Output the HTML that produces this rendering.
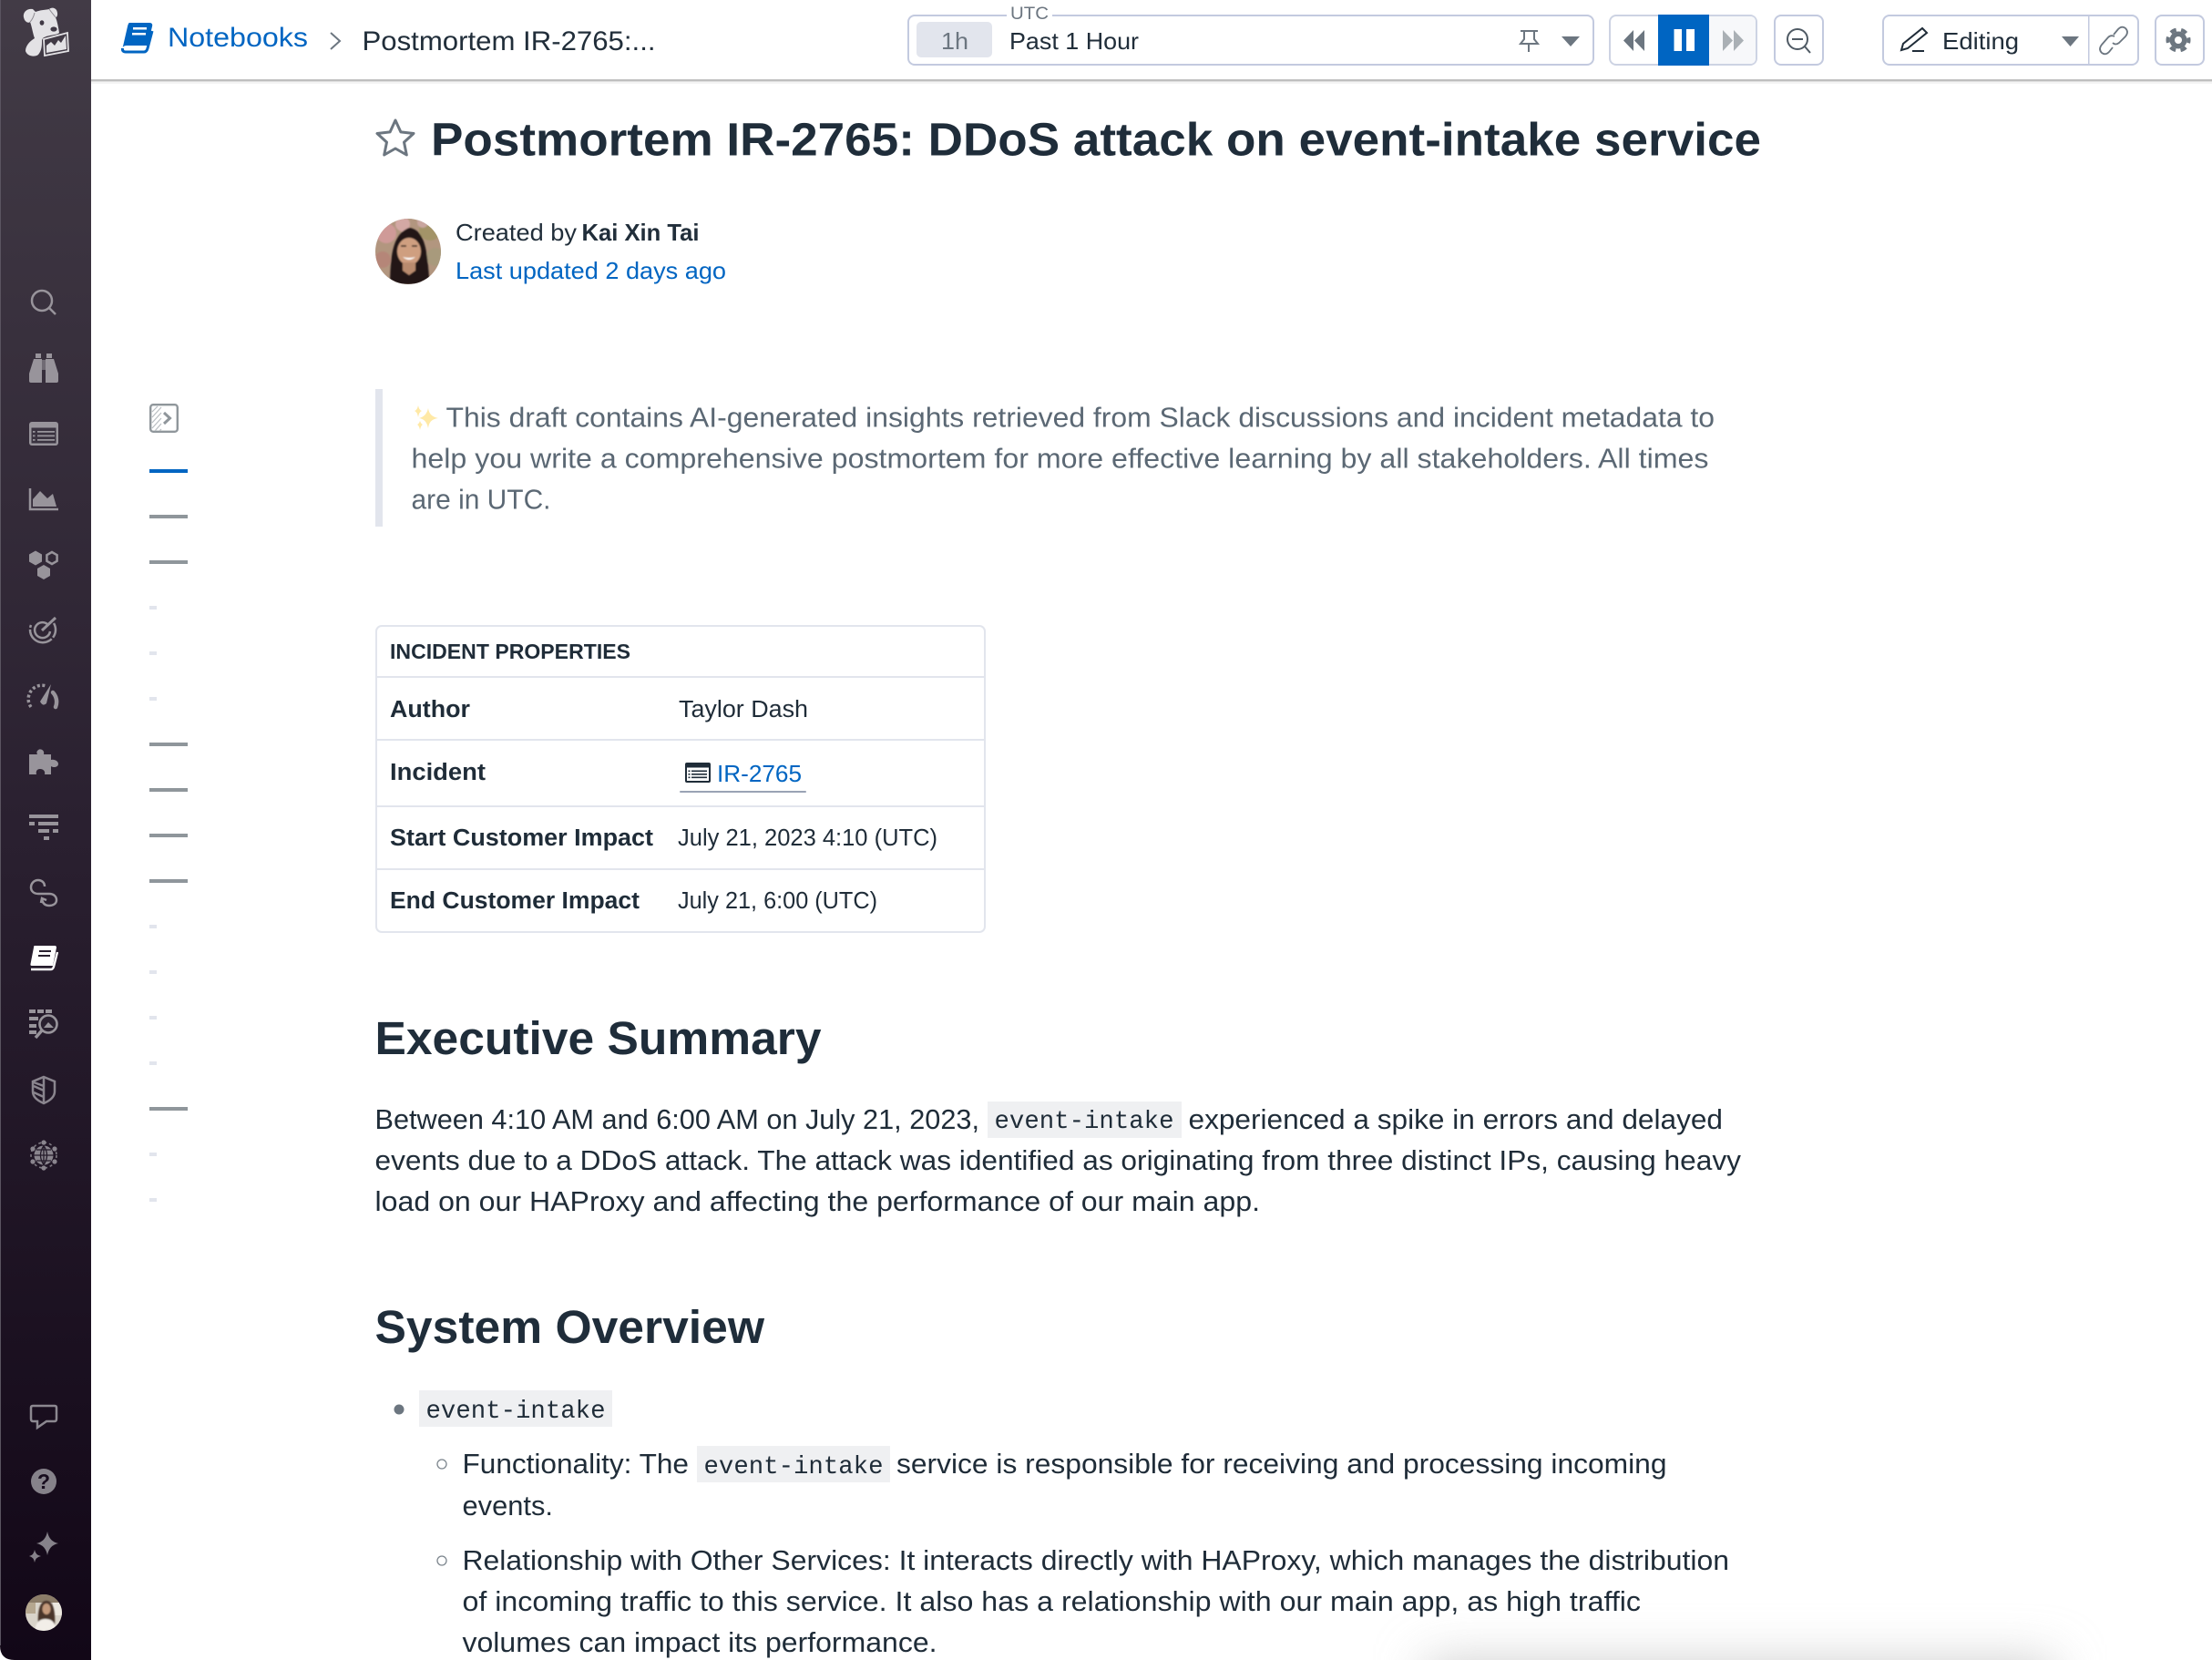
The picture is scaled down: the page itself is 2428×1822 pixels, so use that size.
<!DOCTYPE html>
<html lang="en"><head><meta charset="utf-8"><title>Postmortem IR-2765</title>
<style>
html,body{margin:0;padding:0;width:2428px;height:1822px;overflow:hidden;background:#fff}
svg{display:block}
text{font-family:"Liberation Sans",sans-serif;fill:#212e3a;white-space:pre}
.b{font-size:30.5px;fill:#1f2c38}
.q{font-size:30.5px;fill:#5b6874}
.t{font-size:25.5px;fill:#1f2c38}
.tb{font-size:25.5px;font-weight:700;fill:#1f2c38}
.h{font-size:51px;font-weight:700;fill:#1f2d3a}
.m{font-family:"Liberation Mono",monospace;font-size:27.5px;fill:#1f2c38}
.i{fill:#98949b}
.s{fill:none;stroke:#98949b;stroke-width:2.5}
.c{fill:#eff0f2}
.bx{fill:#fff;stroke:#c3cadf;stroke-width:2}
</style></head><body>
<svg xmlns="http://www.w3.org/2000/svg" width="2428" height="1822" viewBox="0 0 2428 1822">
<defs>
<linearGradient id="sb" x1="0" y1="0" x2="0" y2="1"><stop offset="0" stop-color="#423b46"/><stop offset=".5" stop-color="#2a2030"/><stop offset="1" stop-color="#120717"/></linearGradient>
<filter id="bl" filterUnits="userSpaceOnUse" x="1400" y="1650" width="1028" height="340"><feGaussianBlur stdDeviation="26"/></filter>
<filter id="sf" x="-20%" y="-20%" width="140%" height="140%"><feGaussianBlur stdDeviation="0.9"/></filter>
<clipPath id="a1"><circle cx="448" cy="276" r="36"/></clipPath>
<clipPath id="a2"><circle cx="48" cy="1770" r="20"/></clipPath>
</defs>

<!-- bottom shadow -->
<rect x="1565" y="1822" width="690" height="90" fill="#d0d0d0" filter="url(#bl)"/>

<!-- sidebar -->
<path d="M0 0H100V1822H16Q0 1822 0 1806Z" fill="url(#sb)"/>
<rect x="0" y="0" width="1" height="1806" fill="#5a5460"/>

<!-- logo -->
<path fill="#e3e2e5" d="M36 10C30 9 25 13 26 19C27 24 31 26 33 24C35 29 36 37 38 42C33 45 28 50 28 56C30 62 38 63 42 60C46 55 46 50 46 44L47 42C52 38 62 39 65 36C64 30 63 24 61 19C63 19 64 15 62 11C60 8 56 8 54 10C49 11 44 11 39 13Z"/>
<path d="M38 14C37 18 36 21 33 24M54 10C56 13 58 15 61 19" fill="none" stroke="#8f8b92" stroke-width="1"/>
<ellipse cx="46" cy="25" rx="2.4" ry="2.8" fill="#403945"/>
<ellipse cx="59" cy="32" rx="3.6" ry="2.6" fill="#403945"/>
<path d="M48 43L74 36L75 56L49 61Z" fill="#413a45" stroke="#e3e2e5" stroke-width="1.8"/>
<path d="M51 50L56 46L60 50L64 44L67 47L72 39L73 54L51 58Z" fill="#e3e2e5"/>

<!-- sidebar icons -->
<circle class="s" cx="46" cy="330" r="11"/><path class="s" d="M54 338L61 345"/>
<path class="i" d="M39 388h6v5h-6zM51 388h6v5h-6zM37 394h9v26H34q-2 0-2-2v-8zM59 394h-9v26h12q2 0 2-2v-8z"/><rect x="46" y="395" width="4" height="11" fill="#706b74"/>
<rect class="i" x="32" y="463" width="32" height="26" rx="3"/><rect x="34.5" y="469.5" width="27" height="17" fill="#3a3340"/>
<path class="i" d="M41 473h19v1.8H41zM41 477.5h19v1.8H41zM41 482h19v1.8H41zM36 473h2.5v1.8H36zM36 477.5h2.5v1.8H36zM36 482h2.5v1.8H36z"/>
<path class="s" d="M33 536V559H64"/><path class="i" d="M36 556V548L44 539L52 547L58 542L62 556Z"/>
<path class="i" d="M39 604.5L46 608.5V616.5L39 620.5L32 616.5V608.5ZM48 620L55 624V632L48 636L41 632V624Z"/>
<path class="s" d="M57 606L62.6 609.2V615.8L57 619L51.4 615.8V609.2Z"/>
<path class="s" style="stroke-dasharray:3 2 30 0" d="M34 686A14 14 0 1 0 59 684"/><path class="s" d="M53 686A8.5 8.5 0 1 0 55 693"/>
<path class="s" style="stroke-width:3" d="M46 692L61 678"/>
<path class="s" style="stroke-dasharray:3 2.5;stroke-width:3.5" d="M34 776A15 15 0 0 1 51 753"/><path class="s" style="stroke-width:4.5;stroke-linecap:round" d="M58 760A15 15 0 0 1 61 776"/>
<path class="i" d="M44 770L56 751L51 772Q47 776 44 770Z"/>
<path class="i" d="M32 828H41C40 826 40 824 43 822.5C46 822 49 824 48 828H56V834C59 833 64 835 64 838.5C64 842 59 843 56 841V850H49C50 846 47 844 44 844C41 844 39 846 40 850H32Z"/>
<path class="i" d="M32 894h32v4H32zM32 902h6v4h-6zM42 902h22v4H42zM42 910h12v4H42zM58 910h6v4h-6zM48 918h6v4h-6z"/>
<path class="s" d="M49 973C49 968 45 966 42 966C37 966 34 970 34 974C34 978 37 981 42 981H54C59 981 62 984 62 988C62 992 58 994 54 994C50 994 47 992 46 987"/>
<path class="s" d="M51 988L46 986L45 991"/>
<path fill="#fff" d="M38 1038H60Q62 1038 62 1040L58 1060H35Q33 1060 33.5 1058L37 1040Q37 1038 38 1038Z"/>
<rect x="43" y="1043" width="13" height="2" fill="#29202f"/><rect x="42" y="1048" width="13" height="2" fill="#29202f"/>
<path d="M34 1064H56Q58 1064 59 1061L63 1045" fill="none" stroke="#fff" stroke-width="2.4"/>
<path class="i" d="M32 1108h7v4h-7zM41 1108h7v4h-7zM50 1108h7v4h-7zM32 1116h10v4H32zM32 1124h8v4h-8zM32 1131h8v4h-8z"/>
<circle cx="53" cy="1124" r="9.5" fill="#29202f" stroke="#98949b" stroke-width="2.6"/><path class="s" style="stroke-width:3.5" d="M46 1131L39 1139"/><path class="i" d="M48 1128L53 1122L59 1128Z"/>
<path class="s" style="stroke:#8a858e" d="M48 1182L60 1187V1198C60 1204 55 1208 48 1211C41 1208 36 1204 36 1198V1187Z"/>
<path class="s" style="stroke:#8a858e" d="M48 1182V1211M37 1192L48 1197M37 1199L48 1204M37 1188L48 1192"/>
<circle cx="48" cy="1268" r="10.5" fill="#8a858e"/><path d="M37.5 1268H58.5M48 1257.5V1278.5M48 1257.5Q41 1268 48 1278.5M48 1257.5Q55 1268 48 1278.5M40 1262H56M40 1274H56" fill="none" stroke="#241b2a" stroke-width="1.3"/>
<circle class="s" cx="48" cy="1268" r="14" style="stroke-dasharray:3 3;stroke-width:1.6;stroke:#7d7881"/>
<g fill="#8a858e"><circle cx="48" cy="1254" r="2.6"/><circle cx="48" cy="1282" r="2.6"/><circle cx="36" cy="1261" r="2.6"/><circle cx="60" cy="1261" r="2.6"/><circle cx="36" cy="1275" r="2.6"/><circle cx="60" cy="1275" r="2.6"/></g>
<path class="s" style="stroke:#8c8890" d="M36 1543H60Q62 1543 62 1545V1557Q62 1560 60 1560H51L41 1567V1560H36Q34 1560 34 1557V1545Q34 1543 36 1543Z"/>
<circle cx="48" cy="1626" r="14" fill="#86828a"/><text x="48" y="1634" text-anchor="middle" style="font-size:23px;font-weight:700;fill:#170c1d">?</text>
<path fill="#86828a" d="M52 1681Q54 1692 64 1694Q54 1696 52 1707Q50 1696 40 1694Q50 1692 52 1681ZM38 1701Q39 1707 45 1708Q39 1709 38 1715Q37 1709 32 1708Q37 1707 38 1701Z"/>
<g clip-path="url(#a2)"><rect x="28" y="1750" width="40" height="40" fill="#d9d4ca"/><rect x="28" y="1750" width="40" height="9" fill="#8b7c68"/><rect x="28" y="1759" width="11" height="12" fill="#b5a78f"/><rect x="58" y="1759" width="10" height="14" fill="#ece8df"/><g filter="url(#sf)"><path d="M42 1785C41 1770 43 1757 51 1757C59 1757 61 1770 60 1785Z" fill="#4a352a"/><ellipse cx="51" cy="1766" rx="4.5" ry="6" fill="#c49a7c"/><path d="M38 1790Q40 1776 51 1777Q60 1777 62 1790Z" fill="#f2eee8"/></g></g>

<!-- header -->
<rect x="100" y="87" width="2328" height="2" fill="#bfbfbf"/><rect x="100" y="89" width="2328" height="1" fill="#e0e0e0"/><rect x="100" y="90" width="2328" height="2" fill="#f4f4f4"/>
<path d="M142 25H164Q168 25 167 29L162 50H139Q135 50 134.5 53L140 29Q141 25 142 25Z" fill="#0065c2"/>
<path d="M134.5 53Q134 57 138 57H158Q161 57 162 53L167 34" fill="none" stroke="#0065c2" stroke-width="3"/>
<rect x="146" y="30" width="15" height="2.5" fill="#fff"/><rect x="145" y="36" width="15" height="2.5" fill="#fff"/>
<text x="184" y="51" textLength="154" lengthAdjust="spacingAndGlyphs" style="font-size:30px;fill:#0065c2">Notebooks</text>
<path d="M363 36L373 45L363 54" fill="none" stroke="#6c7680" stroke-width="2"/>
<text x="397.5" y="55" textLength="322" lengthAdjust="spacingAndGlyphs" style="font-size:30px">Postmortem IR-2765:...</text>

<!-- time controls -->
<rect class="bx" x="997" y="17" width="752" height="54" rx="7"/>
<rect x="1105" y="10" width="50" height="12" fill="#fff"/>
<text x="1109" y="21" textLength="42" lengthAdjust="spacingAndGlyphs" style="font-size:19px;fill:#6c7680">UTC</text>
<rect x="1006" y="24" width="83" height="39" rx="5" fill="#e2e5ed"/>
<text x="1033" y="54" textLength="30" lengthAdjust="spacingAndGlyphs" style="font-size:26px;fill:#6c7680">1h</text>
<text x="1108" y="54" textLength="142" lengthAdjust="spacingAndGlyphs" style="font-size:26px">Past 1 Hour</text>
<path d="M1669 34H1688M1673 34V43L1669 48H1688L1684 43V34M1678 48V57" fill="none" stroke="#6c7680" stroke-width="2"/>
<path d="M1714 40H1734L1724 51Z" fill="#6c7680"/>

<rect class="bx" x="1767" y="17" width="161" height="54" rx="7" style="stroke:#cdd3e3"/>
<path d="M1876 18H1921Q1927 18 1927 24V64Q1927 70 1921 70H1876Z" fill="#f7f8fa"/>
<rect x="1820" y="16" width="56" height="56" fill="#0065c2"/>
<path d="M1793 33L1782 44.5L1793 56ZM1805 33L1794 44.5L1805 56Z" fill="#6c7680"/>
<path d="M1837.5 32H1846V56H1837.5ZM1851 32H1860V56H1851Z" fill="#fff"/>
<path d="M1891 33L1902 44.5L1891 56ZM1903 33L1914 44.5L1903 56Z" fill="#aab0b5"/>

<rect class="bx" x="1948" y="17" width="53" height="54" rx="7"/>
<circle cx="1973" cy="43" r="11" fill="none" stroke="#4f5a64" stroke-width="2"/><path d="M1967 43H1979M1981 51L1987 58" fill="none" stroke="#4f5a64" stroke-width="2"/>

<rect class="bx" x="2067" y="17" width="280" height="54" rx="7"/>
<rect x="2292" y="17" width="1.5" height="54" fill="#c3cadf"/>
<path d="M2110 31L2115 36L2094 53L2087 55L2089 48ZM2099 56H2112" fill="none" stroke="#1f2c38" stroke-width="2"/>
<text x="2132" y="54" textLength="84" lengthAdjust="spacingAndGlyphs" style="font-size:26px">Editing</text>
<path d="M2263 40H2282L2272.5 51Z" fill="#6c7680"/>
<path d="M2320 38L2325 32Q2329 28 2333 31Q2337 35 2333 40L2326 47Q2322 50 2319 47M2321 40Q2317 38 2314 41L2307 49Q2303 54 2307 58Q2311 61 2315 57L2319 52" fill="none" stroke="#6c7680" stroke-width="1.8"/>

<rect class="bx" x="2366" y="17" width="53" height="54" rx="7"/>
<circle cx="2391" cy="44" r="9.5" fill="#6c7680"/><circle cx="2391" cy="44" r="11.5" fill="none" stroke="#6c7680" stroke-width="4" stroke-dasharray="6.5 5.54" stroke-dashoffset="3.2"/><circle cx="2391" cy="44" r="4" fill="#fff"/>

<!-- title -->
<path d="M434 132L439.9 144.9L454 146.5L443.5 156.1L446.3 170L434 163L421.7 170L424.5 156.1L414 146.5L428.1 144.9Z" fill="none" stroke="#6c7680" stroke-width="3" stroke-linejoin="round"/>
<text class="h" x="473" y="170.5" textLength="1460" lengthAdjust="spacingAndGlyphs">Postmortem IR-2765: DDoS attack on event-intake service</text>

<!-- author avatar -->
<g clip-path="url(#a1)">
<rect x="412" y="240" width="72" height="72" fill="#b2967f"/>
<g filter="url(#sf)">
<circle cx="424" cy="256" r="11" fill="#cf9a98"/><circle cx="442" cy="246" r="8" fill="#d3a8a4"/><circle cx="472" cy="252" r="12" fill="#a39468"/><circle cx="420" cy="285" r="9" fill="#b58678"/><circle cx="478" cy="282" r="10" fill="#a89a7c"/><circle cx="464" cy="244" r="6" fill="#c9a6a0"/>
<path d="M428 312C429 290 428 258 449 250C470 252 469 288 472 312Z" fill="#201715"/>
<ellipse cx="449" cy="276" rx="13" ry="15" fill="#cf9f80"/>
<path d="M440 270h6M452 270h6" stroke="#2a1c18" stroke-width="1.6"/>
<path d="M442 282Q449 288 456 282Q449 284 442 282Z" fill="#fff"/>
<path d="M442 288h14v9l-7 5-7-5z" fill="#b98b6e"/>
</g>
</g>
<text x="500" y="264" textLength="133" lengthAdjust="spacingAndGlyphs" style="font-size:26px">Created by</text>
<text x="638.5" y="264" textLength="129" lengthAdjust="spacingAndGlyphs" style="font-size:26px;font-weight:700">Kai Xin Tai</text>
<text x="500" y="306" textLength="297" lengthAdjust="spacingAndGlyphs" style="font-size:26px;fill:#0065c2">Last updated 2 days ago</text>

<!-- toc -->
<rect x="165.2" y="444.2" width="29.6" height="29.6" rx="3" fill="#fff" stroke="#8f969b" stroke-width="2.4"/>
<path d="M167 452L173 446M167 458L177 447M167 464L177 453M167 470L177 459M170 473L177 465M175 473L177 471" stroke="#b9bec2" stroke-width="1.2"/>
<path d="M180 453L186.5 459L180 465" fill="none" stroke="#8f969b" stroke-width="3"/>
<rect x="164" y="515" width="42" height="4" fill="#0065c2"/>
<g fill="#8f969b"><rect x="164" y="565" width="42" height="4"/><rect x="164" y="615" width="42" height="4"/><rect x="164" y="815" width="42" height="4"/><rect x="164" y="865" width="42" height="4"/><rect x="164" y="915" width="42" height="4"/><rect x="164" y="965" width="42" height="4"/><rect x="164" y="1215" width="42" height="4"/></g>
<g fill="#e2e5ed"><rect x="164" y="665" width="8" height="4"/><rect x="164" y="715" width="8" height="4"/><rect x="164" y="765" width="8" height="4"/><rect x="164" y="1015" width="8" height="4"/><rect x="164" y="1065" width="8" height="4"/><rect x="164" y="1115" width="8" height="4"/><rect x="164" y="1165" width="8" height="4"/><rect x="164" y="1265" width="8" height="4"/><rect x="164" y="1315" width="8" height="4"/></g>

<!-- quote -->
<rect x="412" y="427" width="8" height="151" fill="#e2e5ed"/>
<path fill="#ffe9a6" d="M470 448Q471 457 481 459Q471 460 470 470Q468 460 460 459Q468 457 470 448ZM459 445Q460 450 463 451Q460 452 459 458Q458 452 455 451Q458 450 459 445ZM461 462Q462 465 464 466Q462 467 461 472Q460 467 458 466Q460 465 461 462Z"/>
<text class="q" x="489.5" y="468.5" textLength="1392.5" lengthAdjust="spacingAndGlyphs">This draft contains AI-generated insights retrieved from Slack discussions and incident metadata to</text>
<text class="q" x="451.5" y="513.5" textLength="1424" lengthAdjust="spacingAndGlyphs">help you write a comprehensive postmortem for more effective learning by all stakeholders. All times</text>
<text class="q" x="451.5" y="558.5" textLength="153" lengthAdjust="spacingAndGlyphs">are in UTC.</text>

<!-- table -->
<rect x="413" y="687" width="668" height="336" rx="6" fill="#fff" stroke="#e2e5ed" stroke-width="2"/>
<path d="M413 743H1081M413 812H1081M413 885H1081M413 954H1081" stroke="#e2e5ed" stroke-width="2"/>
<text class="tb" x="428" y="723" textLength="264" lengthAdjust="spacingAndGlyphs" style="font-size:23px">INCIDENT PROPERTIES</text>
<text class="tb" x="428" y="787" textLength="88" lengthAdjust="spacingAndGlyphs">Author</text>
<text class="t" x="745" y="787" textLength="142" lengthAdjust="spacingAndGlyphs">Taylor Dash</text>
<text class="tb" x="428" y="856" textLength="105" lengthAdjust="spacingAndGlyphs">Incident</text>
<rect x="752" y="837" width="28" height="22" rx="2" fill="#1f2c38"/><rect x="754" y="842.5" width="24" height="14.5" fill="#fff"/>
<path d="M759 845.5h17v1.6h-17zM759 849h17v1.6h-17zM759 852.5h17v1.6h-17zM755.5 845.5h2v1.6h-2zM755.5 849h2v1.6h-2zM755.5 852.5h2v1.6h-2z" fill="#1f2c38"/>
<text x="787" y="858" textLength="93" lengthAdjust="spacingAndGlyphs" style="font-size:26px;fill:#0065c2">IR-2765</text>
<rect x="746" y="868" width="139" height="2" rx="1" fill="#9aa3b5"/>
<text class="tb" x="428" y="928" textLength="289" lengthAdjust="spacingAndGlyphs">Start Customer Impact</text>
<text class="t" x="744" y="928" textLength="285" lengthAdjust="spacingAndGlyphs">July 21, 2023 4:10 (UTC)</text>
<text class="tb" x="428" y="997" textLength="274" lengthAdjust="spacingAndGlyphs">End Customer Impact</text>
<text class="t" x="744" y="997" textLength="219" lengthAdjust="spacingAndGlyphs">July 21, 6:00 (UTC)</text>

<!-- exec summary -->
<text class="h" x="411.5" y="1157" textLength="490" lengthAdjust="spacingAndGlyphs">Executive Summary</text>
<text class="b" x="411.5" y="1239" textLength="663.5" lengthAdjust="spacingAndGlyphs">Between 4:10 AM and 6:00 AM on July 21, 2023,</text>
<rect class="c" x="1084" y="1209" width="213" height="40"/>
<text class="m" x="1091.5" y="1238" textLength="197" lengthAdjust="spacingAndGlyphs">event-intake</text>
<text class="b" x="1304.5" y="1239" textLength="586.5" lengthAdjust="spacingAndGlyphs">experienced a spike in errors and delayed</text>
<text class="b" x="411.5" y="1284" textLength="1499.5" lengthAdjust="spacingAndGlyphs">events due to a DDoS attack. The attack was identified as originating from three distinct IPs, causing heavy</text>
<text class="b" x="411.5" y="1329" textLength="971.5" lengthAdjust="spacingAndGlyphs">load on our HAProxy and affecting the performance of our main app.</text>

<!-- system overview -->
<text class="h" x="411.5" y="1474" textLength="427.5" lengthAdjust="spacingAndGlyphs">System Overview</text>
<circle cx="438" cy="1547" r="5.5" fill="#6c7680"/>
<rect class="c" x="460" y="1526" width="212" height="40"/>
<text class="m" x="467.5" y="1556" textLength="197" lengthAdjust="spacingAndGlyphs">event-intake</text>
<circle cx="485" cy="1607" r="5" fill="none" stroke="#7c858d" stroke-width="1.3"/>
<text class="b" x="507.5" y="1617" textLength="248.5" lengthAdjust="spacingAndGlyphs">Functionality: The</text>
<rect class="c" x="765" y="1587" width="212" height="40"/>
<text class="m" x="772.5" y="1617" textLength="197" lengthAdjust="spacingAndGlyphs">event-intake</text>
<text class="b" x="984" y="1617" textLength="845.5" lengthAdjust="spacingAndGlyphs">service is responsible for receiving and processing incoming</text>
<text class="b" x="507.5" y="1663" textLength="99.5" lengthAdjust="spacingAndGlyphs">events.</text>
<circle cx="485" cy="1713" r="5" fill="none" stroke="#7c858d" stroke-width="1.3"/>
<text class="b" x="507.5" y="1723" textLength="1390.5" lengthAdjust="spacingAndGlyphs">Relationship with Other Services: It interacts directly with HAProxy, which manages the distribution</text>
<text class="b" x="507.5" y="1768" textLength="1293.5" lengthAdjust="spacingAndGlyphs">of incoming traffic to this service. It also has a relationship with our main app, as high traffic</text>
<text class="b" x="507.5" y="1813" textLength="521" lengthAdjust="spacingAndGlyphs">volumes can impact its performance.</text>
</svg>
</body></html>
